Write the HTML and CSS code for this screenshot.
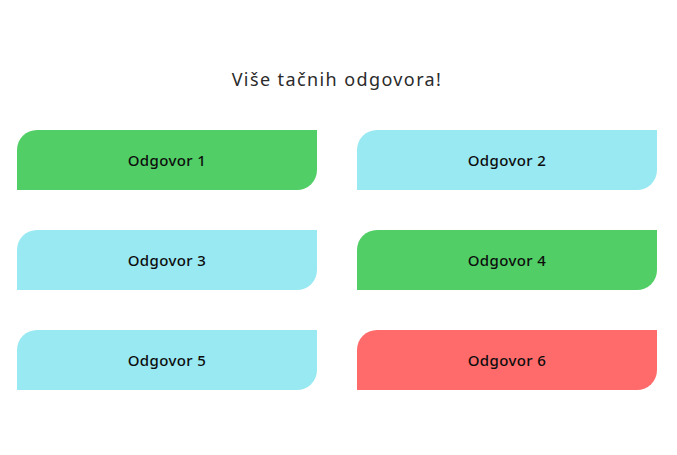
FILE: index.html
```html
<!DOCTYPE html>
<html lang="sr">
<head>
<meta charset="utf-8">
<link rel="stylesheet" href="styles.css">
</head>
<body>
<main class="quiz">
  <h1 class="question">Više tačnih odgovora!</h1>
  <div class="answers">
    <button class="answer correct">Odgovor 1</button>
    <button class="answer neutral">Odgovor 2</button>
    <button class="answer neutral">Odgovor 3</button>
    <button class="answer correct">Odgovor 4</button>
    <button class="answer neutral">Odgovor 5</button>
    <button class="answer wrong">Odgovor 6</button>
  </div>
</main>
</body>
</html>
```
FILE: styles.css
```css
html, body {
  margin: 0;
  padding: 0;
  background: #ffffff;
}
body {
  font-family: "Noto Sans", "Open Sans", sans-serif;
}
.quiz {
  padding: 0 20px 0 17px;
}
.question {
  margin: 0;
  padding-top: 67px;
  height: 130px;
  box-sizing: border-box;
  text-align: center;
  font-size: 18px;
  line-height: 24px;
  font-weight: 400;
  letter-spacing: 1.4px;
  color: #2b2b2b;
}
.answers {
  display: grid;
  grid-template-columns: 300px 300px;
  column-gap: 40px;
  row-gap: 40px;
}
.answer {
  height: 60px;
  border: none;
  border-radius: 20px 0 20px 0;
  font-family: "Noto Sans", "Open Sans", sans-serif;
  font-size: 15px;
  font-weight: 500;
  letter-spacing: 0.4px;
  color: #0d0d0d;
  padding: 0;
}
.correct { background: #51cf66; }
.neutral { background: #99e9f2; }
.wrong { background: #ff6b6b; }
```
